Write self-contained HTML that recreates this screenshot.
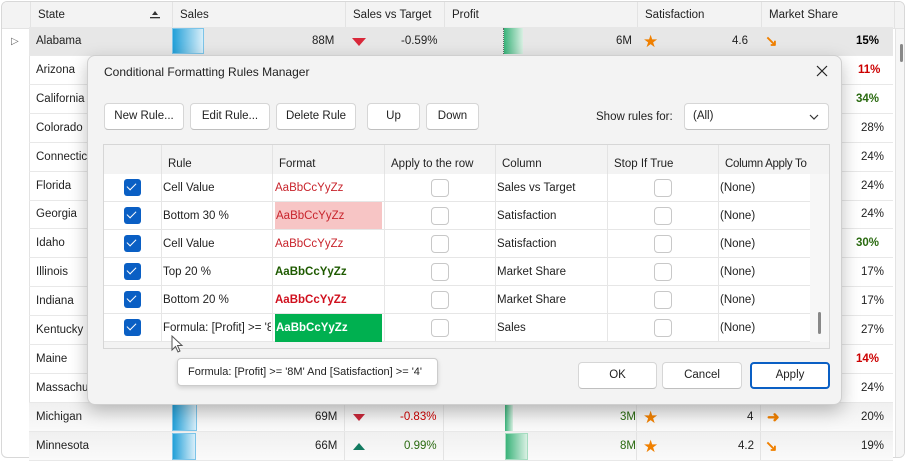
<!DOCTYPE html>
<html><head><meta charset="utf-8"><style>
*{box-sizing:border-box;margin:0;padding:0}
body{width:906px;height:459px;background:#fff;font-family:"Liberation Sans",sans-serif;font-size:11.5px;color:#222;position:relative;overflow:hidden}
.a{position:absolute}
.frame{left:1px;top:1px;width:904px;height:457px;border:1px solid #d8d8d8;border-radius:6px;overflow:hidden;background:#fff}
.hdr{left:0;top:0;width:906px;height:27px;background:#f3f3f3;border-bottom:1px solid #e3e3e3}
.hc{top:0;height:27px;line-height:27px;padding-left:7px;border-left:1px solid #e3e3e3}
.row{left:29px;width:864px;height:29px;border-bottom:1px solid #e8e8e8;line-height:29px}
.row span{position:absolute}
.dlg{left:87px;top:55px;width:755px;height:350px;background:#f3f3f3;border:1px solid #cfcfcf;border-radius:8px;box-shadow:0 6px 18px rgba(0,0,0,.25)}
.btn{position:absolute;height:27px;background:#fff;border:1px solid #d6d6d6;border-bottom-color:#bfbfbf;border-radius:4px;text-align:center;line-height:25px}
.g{left:15px;top:88px;width:727px;height:205px;background:#f3f3f3;border:1px solid #d6d6d6}
.gh{position:absolute;top:0;height:29px;line-height:38px;padding-left:6px;border-left:1px solid #e3e3e3;white-space:nowrap;overflow:visible}
.gr{position:absolute;left:0;width:706px;height:28px;background:#fff;border-bottom:1px solid #e6e6e6}
.gr span{position:absolute;top:0;line-height:28px}
.cb{position:absolute;width:17px;height:17px;border-radius:3px;background:#0a5fc4;top:5px;left:20px}
.cb:after{content:"";position:absolute;left:5px;top:2px;width:4px;height:8px;border:solid #fff;border-width:0 1.5px 1.5px 0;transform:rotate(45deg)}
.ub{position:absolute;width:18px;height:18px;border:1px solid #c8c8c8;border-radius:4px;background:#fff;top:5px}
.vl{position:absolute;top:0;height:28px;width:1px;background:#e6e6e6}
</style></head><body>
<div class="a frame">
<div class="a hdr"></div>
<div class="a hc" style="left:28px;width:142px">State</div>
<svg class="a" style="left:147px;top:7px" width="12" height="12" viewBox="0 0 12 12"><path d="M6 2 L9 6 L3 6 Z" fill="#333"/><rect x="1" y="8" width="10" height="1.3" fill="#333"/></svg>
<div class="a hc" style="left:170px;width:173px">Sales</div>
<div class="a hc" style="left:343px;width:99px">Sales vs Target</div>
<div class="a hc" style="left:442px;width:193px">Profit</div>
<div class="a hc" style="left:635px;width:124px">Satisfaction</div>
<div class="a hc" style="left:759px;width:133px">Market Share</div>
<div class="a hc" style="left:892px;width:13px"></div>
<div class="a" style="left:893px;top:27px;width:12px;height:430px;background:#f6f6f6;border-left:1px solid #e3e3e3"></div>
<div class="a" style="left:898px;top:42px;width:3px;height:18px;background:#888;border-radius:2px"></div>
<div class="a" style="left:0;top:27px;width:28px;height:430px;border-right:1px solid #e3e3e3"></div>
<div class="a" style="left:9px;top:34px;font-size:10px;color:#666">&#9655;</div>
</div>
<!-- rows -->
<div class="a row" style="top:27px;background:#e7e7e7"><span style="left:7px">Alabama</span><span style="left:143px;top:1px;width:32px;height:26px;background:linear-gradient(90deg,#22a0d8,#d8eef9);border:1px solid #7cc4e8"></span><span style="left:283px">88M</span><span style="left:323px;top:11px;width:0;height:0;border-left:7px solid transparent;border-right:7px solid transparent;border-top:8px solid #d9283a"></span><span style="left:372px">-0.59%</span><span style="left:474px;top:1px;width:20px;height:26px;background:linear-gradient(90deg,#3ab37a,#d9f0e3);border-left:1px dotted #666"></span><span style="left:587px">6M</span><span style="left:614px;color:#f08000;font-size:17px">&#9733;</span><span style="left:703px">4.6</span><span style="left:736px;color:#f08000;font-size:15px;font-weight:bold">&#8600;</span><span style="left:827px;font-weight:bold;color:#000">15%</span></div>
<div class="a row" style="top:56px"><span style="left:7px">Arizona</span><span style="left:829px;font-weight:bold;color:#c00">11%</span></div>
<div class="a row" style="top:85px"><span style="left:7px">California</span><span style="left:827px;font-weight:bold;color:#2a6a10">34%</span></div>
<div class="a row" style="top:114px"><span style="left:7px">Colorado</span><span style="left:832px">28%</span></div>
<div class="a row" style="top:143px"><span style="left:7px">Connecticut</span><span style="left:832px">24%</span></div>
<div class="a row" style="top:172px"><span style="left:7px">Florida</span><span style="left:832px">24%</span></div>
<div class="a row" style="top:200px"><span style="left:7px">Georgia</span><span style="left:832px">24%</span></div>
<div class="a row" style="top:229px"><span style="left:7px">Idaho</span><span style="left:827px;font-weight:bold;color:#2a6a10">30%</span></div>
<div class="a row" style="top:258px"><span style="left:7px">Illinois</span><span style="left:832px">17%</span></div>
<div class="a row" style="top:287px"><span style="left:7px">Indiana</span><span style="left:832px">17%</span></div>
<div class="a row" style="top:316px"><span style="left:7px">Kentucky</span><span style="left:832px">27%</span></div>
<div class="a row" style="top:345px"><span style="left:7px">Maine</span><span style="left:827px;font-weight:bold;color:#c00">14%</span></div>
<div class="a row" style="top:374px"><span style="left:7px">Massachusetts</span><span style="left:832px">24%</span></div>
<div class="a row" style="top:403px;background:linear-gradient(#f0f0f0,#fafafa)"><span style="left:7px">Michigan</span><span style="left:143px;top:1px;width:25px;height:27px;background:linear-gradient(90deg,#22a0d8,#d8eef9);border:1px solid #7cc4e8"></span><span style="left:286px">69M</span><span style="left:324px;top:11px;width:0;height:0;border-left:6px solid transparent;border-right:6px solid transparent;border-top:7px solid #c8283a"></span><span style="left:371px;color:#c00">-0.83%</span><span style="left:315px;top:0;width:1px;height:28px;background:#e3e3e3"></span><span style="left:414px;top:0;width:1px;height:28px;background:#e3e3e3"></span><span style="left:476px;top:1px;width:8px;height:27px;background:linear-gradient(90deg,#3ab37a,#d9f0e3)"></span><span style="left:591px;color:#2a6a10">3M</span><span style="left:607px;top:0;width:1px;height:28px;background:#e3e3e3"></span><span style="left:614px;color:#f08000;font-size:17px">&#9733;</span><span style="left:718px">4</span><span style="left:731px;top:0;width:1px;height:28px;background:#e3e3e3"></span><span style="left:738px;color:#f08000;font-size:15px;font-weight:bold">&#10140;</span><span style="left:832px">20%</span></div>
<div class="a row" style="top:432px;background:linear-gradient(#f0f0f0,#fafafa)"><span style="left:7px">Minnesota</span><span style="left:143px;top:1px;width:24px;height:27px;background:linear-gradient(90deg,#22a0d8,#d8eef9);border:1px solid #7cc4e8"></span><span style="left:286px">66M</span><span style="left:324px;top:11px;width:0;height:0;border-left:6px solid transparent;border-right:6px solid transparent;border-bottom:7px solid #127a60"></span><span style="left:375px;color:#2a6a10">0.99%</span><span style="left:315px;top:0;width:1px;height:28px;background:#e3e3e3"></span><span style="left:414px;top:0;width:1px;height:28px;background:#e3e3e3"></span><span style="left:476px;top:1px;width:23px;height:27px;background:linear-gradient(90deg,#3ab37a,#d9f0e3);border:1px solid #a5dcc0"></span><span style="left:591px;color:#2a6a10">8M</span><span style="left:607px;top:0;width:1px;height:28px;background:#e3e3e3"></span><span style="left:614px;color:#f08000;font-size:17px">&#9733;</span><span style="left:709px">4.2</span><span style="left:731px;top:0;width:1px;height:28px;background:#e3e3e3"></span><span style="left:736px;color:#f08000;font-size:15px;font-weight:bold">&#8600;</span><span style="left:832px">19%</span></div>

<!-- dialog -->
<div class="a dlg">
<div class="a" style="left:16px;top:9px;font-size:12px">Conditional Formatting Rules Manager</div>
<svg class="a" style="left:728px;top:9px" width="12" height="12" viewBox="0 0 12 12"><path d="M1 1 L11 11 M11 1 L1 11" stroke="#222" stroke-width="1.2"/></svg>
<div class="btn" style="left:16px;top:47px;width:80px">New Rule...</div>
<div class="btn" style="left:102px;top:47px;width:80px">Edit Rule...</div>
<div class="btn" style="left:188px;top:47px;width:80px">Delete Rule</div>
<div class="btn" style="left:279px;top:47px;width:53px">Up</div>
<div class="btn" style="left:338px;top:47px;width:53px">Down</div>
<div class="a" style="left:508px;top:55px">Show rules for:</div>
<div class="btn" style="left:596px;top:47px;width:145px;text-align:left;padding-left:8px">(All)<svg class="a" style="left:124px;top:10px" width="10" height="6" viewBox="0 0 10 6"><path d="M1 1 L5 5 L9 1" stroke="#333" stroke-width="1.2" fill="none"/></svg></div>
<div class="a g">
<div class="gh" style="left:0;width:58px;border:none"></div>
<div class="gh" style="left:57px;width:111px">Rule</div>
<div class="gh" style="left:168px;width:112px">Format</div>
<div class="gh" style="left:280px;width:111px">Apply to the row</div>
<div class="gh" style="left:391px;width:112px">Column</div>
<div class="gh" style="left:503px;width:111px">Stop If True</div>
<div class="gh" style="left:614px;width:92px;letter-spacing:-0.3px">Column Apply To</div>
<div class="gr" style="top:29px"><div class="cb"></div><span style="left:59px">Cell Value</span><span style="left:171px;color:#c8242c">AaBbCcYyZz</span><div class="ub" style="left:327px"></div><span style="left:393px">Sales vs Target</span><div class="ub" style="left:550px"></div><span style="left:616px">(None)</span></div>
<div class="gr" style="top:57px"><div class="cb"></div><span style="left:59px">Bottom 30 %</span><span style="left:171px;width:107px;height:27px;background:#f7c5c5;color:#c8242c;padding-left:1px">AaBbCcYyZz</span><div class="ub" style="left:327px"></div><span style="left:393px">Satisfaction</span><div class="ub" style="left:550px"></div><span style="left:616px">(None)</span></div>
<div class="gr" style="top:85px"><div class="cb"></div><span style="left:59px">Cell Value</span><span style="left:171px;color:#c8242c">AaBbCcYyZz</span><div class="ub" style="left:327px"></div><span style="left:393px">Satisfaction</span><div class="ub" style="left:550px"></div><span style="left:616px">(None)</span></div>
<div class="gr" style="top:113px"><div class="cb"></div><span style="left:59px">Top 20 %</span><span style="left:171px;color:#1e5a00;font-weight:bold">AaBbCcYyZz</span><div class="ub" style="left:327px"></div><span style="left:393px">Market Share</span><div class="ub" style="left:550px"></div><span style="left:616px">(None)</span></div>
<div class="gr" style="top:141px"><div class="cb"></div><span style="left:59px">Bottom 20 %</span><span style="left:171px;color:#d0101e;font-weight:bold">AaBbCcYyZz</span><div class="ub" style="left:327px"></div><span style="left:393px">Market Share</span><div class="ub" style="left:550px"></div><span style="left:616px">(None)</span></div>
<div class="gr" style="top:169px"><div class="cb"></div><span style="left:59px;width:108px;overflow:hidden;white-space:nowrap">Formula: [Profit] &gt;= '8M'</span><span style="left:171px;width:107px;height:28px;background:#00b050;color:#fff;font-weight:bold;padding-left:1px">AaBbCcYyZz</span><div class="ub" style="left:327px"></div><span style="left:393px">Sales</span><div class="ub" style="left:550px"></div><span style="left:616px">(None)</span></div>
<div class="vl" style="left:57px;top:29px;height:168px"></div><div class="vl" style="left:168px;top:29px;height:168px"></div><div class="vl" style="left:280px;top:29px;height:168px"></div><div class="vl" style="left:391px;top:29px;height:168px"></div><div class="vl" style="left:503px;top:29px;height:168px"></div><div class="vl" style="left:614px;top:29px;height:168px"></div>
<div class="a" style="left:706px;top:29px;width:19px;height:168px;background:#f7f7f7"></div>
<div class="a" style="left:714px;top:167px;width:3px;height:22px;background:#888;border-radius:2px"></div>
</div>
<div class="btn" style="left:490px;top:306px;width:79px">OK</div>
<div class="btn" style="left:574px;top:306px;width:80px">Cancel</div>
<div class="btn" style="left:662px;top:306px;width:80px;border:2px solid #0a5fc4;line-height:23px">Apply</div>
</div>
<div class="a" style="left:177px;top:358px;width:261px;height:28px;background:#fff;border:1px solid #ccc;border-radius:4px;box-shadow:0 2px 5px rgba(0,0,0,.15);line-height:26px;padding-left:10px;font-size:11px">Formula: [Profit] &gt;= '8M' And [Satisfaction] &gt;= '4'</div>
<svg class="a" style="left:171px;top:335px" width="14" height="20" viewBox="0 0 14 20"><path d="M1 1 L1 15 L4.5 11.5 L7 17 L9 16 L6.5 10.5 L11 10.5 Z" fill="#fff" stroke="#555" stroke-width="1"/></svg>
</body></html>
